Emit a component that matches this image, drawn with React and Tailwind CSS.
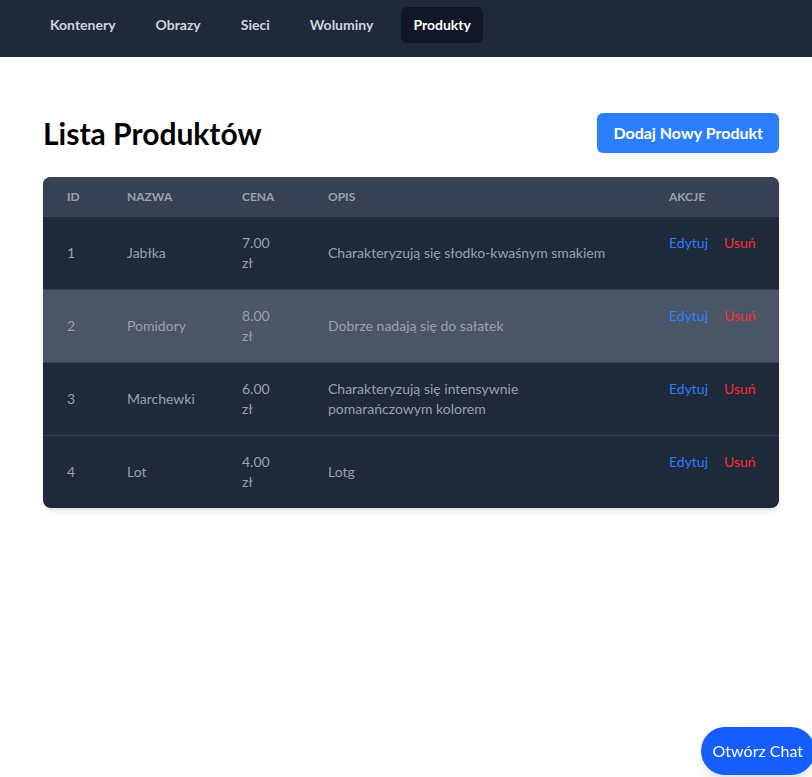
import React from 'react';

const navItems = ['Kontenery', 'Obrazy', 'Sieci', 'Woluminy', 'Produkty'];

const products = [
  { id: 1, name: 'Jabłka', price: '7.00', desc: ['Charakteryzują się słodko-kwaśnym smakiem'] },
  { id: 2, name: 'Pomidory', price: '8.00', desc: ['Dobrze nadają się do sałatek'] },
  { id: 3, name: 'Marchewki', price: '6.00', desc: ['Charakteryzują się intensywnie', 'pomarańczowym kolorem'] },
  { id: 4, name: 'Lot', price: '4.00', desc: ['Lotg'] },
];

const App = () => {
  return (
    <div className="min-h-screen bg-white" style={{ fontFamily: 'Lato, "Noto Sans", sans-serif' }}>
      {/* Navbar */}
      <nav className="bg-gray-800 h-[57px] flex items-center pl-[38px]">
        <div className="flex gap-4 -mt-[7px]">
          {navItems.map((item) => (
            <a
              key={item}
              href="#"
              className={
                item === 'Produkty'
                  ? 'px-3 py-2 rounded-md text-sm font-bold text-white bg-gray-900'
                  : 'px-3 py-2 rounded-md text-sm font-bold text-gray-300'
              }
            >
              {item}
            </a>
          ))}
        </div>
      </nav>

      {/* Content */}
      <div className="pl-[43px] pr-[33px] pt-[56px]">
        <div className="flex items-center justify-between mb-6">
          <h1 className="text-3xl font-bold text-black">Lista Produktów</h1>
          <button className="px-4 py-2 bg-blue-500 text-white font-bold rounded-md">
            Dodaj Nowy Produkt
          </button>
        </div>

        <div className="bg-gray-800 rounded-lg shadow-md overflow-hidden">
          <table className="w-full table-fixed text-left">
            <thead className="bg-gray-700">
              <tr>
                <th className="w-[60px] px-6 h-10 text-xs font-bold text-gray-400 uppercase">ID</th>
                <th className="w-[115px] px-6 h-10 text-xs font-bold text-gray-400 uppercase">Nazwa</th>
                <th className="w-[86px] px-6 h-10 text-xs font-bold text-gray-400 uppercase">Cena</th>
                <th className="px-6 h-10 text-xs font-bold text-gray-400 uppercase">Opis</th>
                <th className="w-[134px] px-6 h-10 text-xs font-bold text-gray-400 uppercase">Akcje</th>
              </tr>
            </thead>
            <tbody className="divide-y divide-gray-700">
              {products.map((p) => (
                <tr key={p.id} className={p.id === 2 ? 'bg-gray-600' : ''}>
                  <td className="px-6 py-4 text-sm text-gray-400">{p.id}</td>
                  <td className="px-6 py-4 text-sm text-gray-400">{p.name}</td>
                  <td className="px-6 py-4 text-sm text-gray-400">
                    {p.price}
                    <br />
                    zł
                  </td>
                  <td className="px-6 py-4 text-sm text-gray-400">
                    {p.desc.map((line) => (
                      <div key={line} className="whitespace-nowrap">{line}</div>
                    ))}
                  </td>
                  <td className="px-6 py-4 text-sm align-top whitespace-nowrap">
                    <a href="#" className="text-blue-500 mr-4">Edytuj</a>
                    <a href="#" className="text-red-500">Usuń</a>
                  </td>
                </tr>
              ))}
            </tbody>
          </table>
        </div>
      </div>

      <button className="fixed bottom-[2px] right-[-3px] px-3 py-3 bg-blue-600 text-white rounded-full shadow-lg">
        Otwórz Chat
      </button>
    </div>
  );
};

export default App;
